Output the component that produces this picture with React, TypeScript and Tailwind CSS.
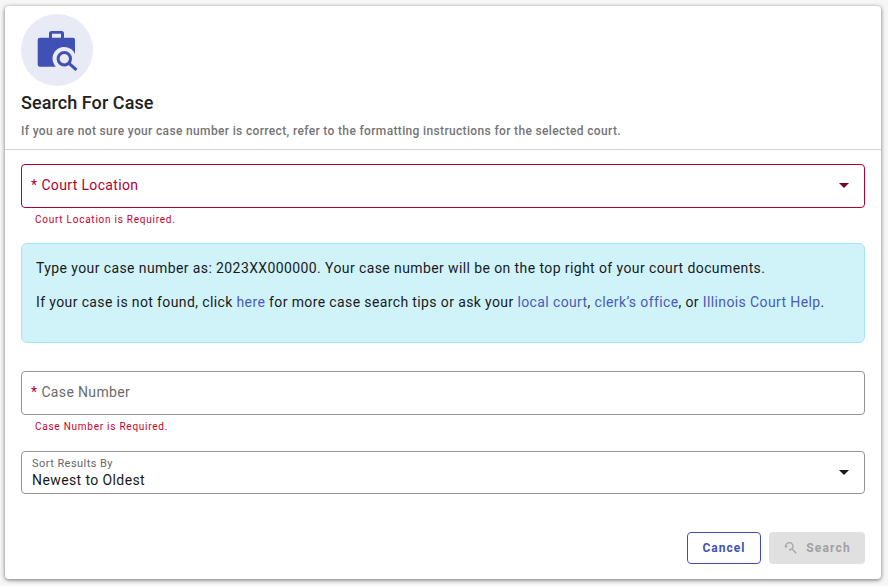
function CaseIcon() {
  return (
    <svg width="42" height="42" viewBox="0 0 42 42" fill="none">
      <path
        d="M13 8.700V4.500Q13 2 15.500 2H25.500Q28 2 28 4.500V8.700H37Q39 8.700 39 10.700V25A11.700 11.700 0 1 0 19.800 37.700H4Q1.700 37.700 1.700 35.500V10.700Q1.700 8.700 4 8.700ZM16 4.700V8.700H25V4.700Z"
        fill="#3f51b5"
        fillRule="evenodd"
      />
      <circle cx="28.300" cy="29.700" r="6.200" stroke="#3f51b5" strokeWidth="3" />
      <path d="M33 34.400L40.500 41" stroke="#3f51b5" strokeWidth="3" />
    </svg>
  );
}

function SearchBackIcon() {
  return (
    <svg width="16" height="16" viewBox="0 0 24 24" fill="#a6a6a6">
      <path d="M15.500 14h-.79l-.28-.27A6.470 6.470 0 0 0 16 9.500 6.500 6.500 0 0 0 9.500 3C6.080 3 3.290 5.640 3.050 9h2.020C5.310 6.750 7.190 5 9.500 5 11.990 5 14 7.010 14 9.500S11.990 14 9.500 14c-.17 0-.34-.03-.5-.05v2.020c.17.020.33.030.5.030 1.610 0 3.090-.59 4.230-1.570l.27.280v.79l5 4.990L20.490 19l-4.990-5z" />
      <path d="M2 7.500 7 7.500 4.500 11.500z" transform="translate(0 1)" />
    </svg>
  );
}

function Caret({ dark }: { dark?: boolean }) {
  return (
    <span
      className={`h-0 w-0 border-x-[5px] border-t-[5px] border-x-transparent ${
        dark ? "border-t-[#1a1a1a]" : "border-t-[#7a0026]"
      }`}
    />
  );
}

export default function App() {
  return (
    <div className="h-[586px] w-[888px] overflow-hidden bg-[#f6f6f6] pl-[5px] pt-[6px] font-['Roboto',sans-serif]">
      <div className="flex h-[573px] w-[876px] flex-col rounded-[4px] bg-white shadow-[0_1px_4px_rgba(0,0,0,0.55)]">
        <div className="border-b border-[#d4d4d4] px-4 pt-2 pb-[9px]">
          <div className="flex h-[72px] w-[72px] items-center justify-center rounded-full bg-[#e8eaf6]">
            <CaseIcon />
          </div>
          <h2 className="mt-[6px] text-[18px] leading-[22px] font-medium tracking-[0.07px] text-[#212121]">
            Search For Case
          </h2>
          <p className="mt-[8px] text-[12px] leading-[18px] font-medium tracking-[0.35px] text-[#757575]">
            If you are not sure your case number is correct, refer to the formatting instructions for the selected court.
          </p>
        </div>

        <div className="flex flex-1 flex-col px-4 pt-[14px]">
          <div className="flex h-[44px] items-center justify-between rounded-[4px] border border-[#b00033] pr-[15px] pb-[2px] pl-[9px] text-[14px] tracking-[0.35px] text-[#b00033]">
            <span>
              <span className="mr-[4px]">*</span>Court Location
            </span>
            <Caret />
          </div>
          <p className="mt-[6px] ml-[14px] text-[10px] leading-[12px] tracking-[0.75px] text-[#c8002d]">
            Court Location is Required.
          </p>

          <div className="mt-[17px] h-[100px] rounded-[6px] border border-[#a5e6f3] bg-[#d0f3fa] px-[14px] pt-[14px] text-[14px] leading-[20px] tracking-[0.38px] text-[#1a1a1a]">
            <p className="tracking-[0.4px]">Type your case number as: 2023XX000000. Your case number will be on the top right of your court documents.</p>
            <p className="mt-[14px]">
              If your case is not found, click <a className="text-[#4a5ab9]">here</a> for more case search tips or ask your{" "}
              <a className="text-[#4a5ab9]">local court</a>, <a className="text-[#4a5ab9]">clerk’s office</a>, or{" "}
              <a className="text-[#4a5ab9]">Illinois Court Help</a>.
            </p>
          </div>

          <div className="mt-[28px] flex h-[44px] items-center rounded-[4px] border border-[#949494] pb-[2px] pl-[9px] text-[14px] tracking-[0.35px] text-[#6b6b6b]">
            <span className="mr-[4px] text-[#b00033]">*</span>Case Number
          </div>
          <p className="mt-[6px] ml-[14px] text-[10px] leading-[12px] tracking-[0.75px] text-[#c8002d]">
            Case Number is Required.
          </p>

          <div className="mt-[18px] flex h-[43px] items-center justify-between rounded-[4px] border border-[#949494] pr-[15px] pl-[10px]">
            <div>
              <div className="text-[11px] leading-[14px] tracking-[0.45px] text-[#666666]">Sort Results By</div>
              <div className="text-[14px] leading-[18px] tracking-[0.4px] text-[#1a1a1a]">Newest to Oldest</div>
            </div>
            <Caret dark />
          </div>

          <div className="mt-[38px] flex justify-end gap-2">
            <button className="h-[32px] w-[74px] rounded-[4px] border border-[#3f51b5] bg-white text-[12px] font-bold tracking-[1.05px] text-[#3f51b5]">
              Cancel
            </button>
            <button className="flex h-[32px] w-[96px] items-center justify-center gap-[7px] rounded-[4px] bg-[#e0e0e0] text-[12px] font-bold tracking-[1.2px] text-[#a0a0a0]">
              <SearchBackIcon />
              Search
            </button>
          </div>
        </div>
      </div>
    </div>
  );
}
